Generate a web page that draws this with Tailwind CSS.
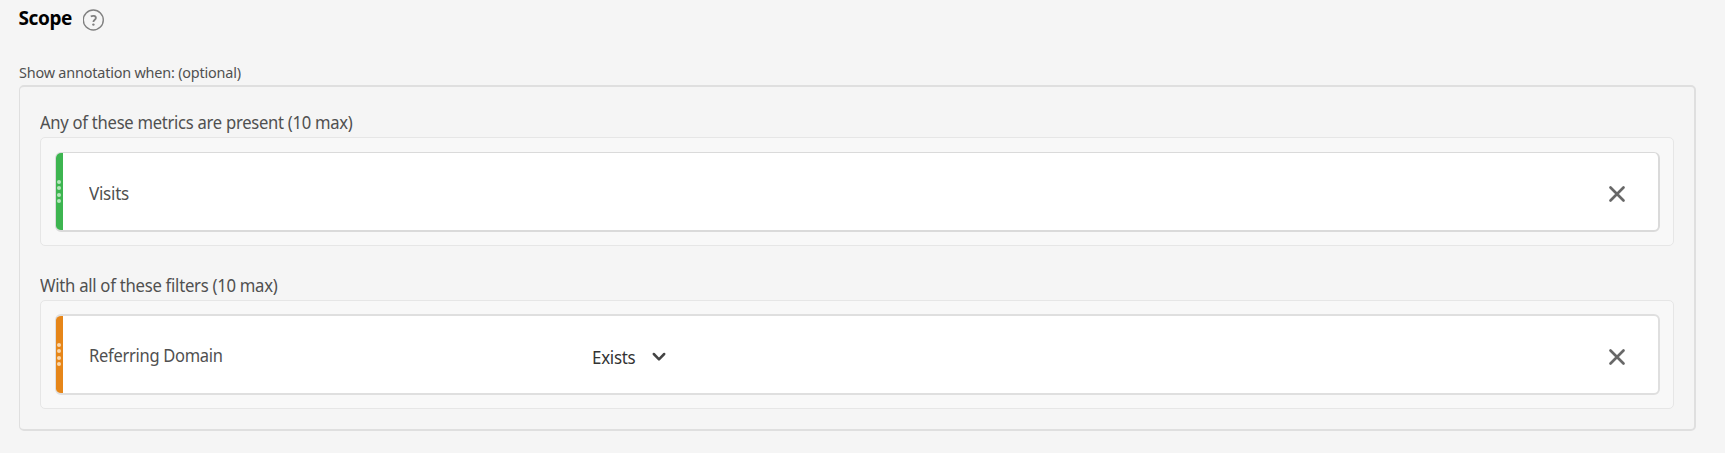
<!DOCTYPE html>
<html lang="en">
<head>
<meta charset="utf-8">
<title>Scope</title>
<script src="https://cdn.jsdelivr.net/npm/@tailwindcss/browser@4"></script>
</head>
<body class="h-[453px] overflow-hidden bg-[#f5f5f5] pl-[19px] pr-[29px] font-['Noto_Sans',sans-serif] text-[#505050]">
<header class="flex h-[64px] items-start pt-[4px]">
  <h1 class="h-7 w-[64px] whitespace-nowrap text-[19px] leading-7 font-bold tracking-[-0.4px] text-black"><span class="-ml-[0.5px] inline-block">Scope</span></h1>
  <svg class="mt-[5px] size-[22px]" viewBox="0 0 22 22" fill="none" stroke="#808080"><circle cx="10.3" cy="11" r="10" stroke-width="1.4"/><path d="M7.8 7.5C9.3 6.4 12.9 6.4 12.9 8.9C12.9 10.7 10.4 10.9 10.4 13.1" stroke-width="1.8"/><circle cx="10.4" cy="15.6" r="1.2" fill="#808080" stroke="none"/></svg>
</header>
<p class="h-[21px] text-[15px] leading-[17px] tracking-[-0.2px] whitespace-nowrap"><span class="-ml-[0.5px] inline-block origin-left scale-x-[0.961]">Show annotation when: (optional)</span></p>
<main class="h-[346px] rounded-[5px] border-y-2 border-r-2 border-l border-[#dfdfdf] pt-[22px] pr-[20px] pl-[20px]">
  <h2 class="h-[28px] text-[18px] leading-[27px] tracking-[-0.3px] whitespace-nowrap"><span class="inline-block origin-left scale-x-[0.923]">Any of these metrics are present (10 max)</span></h2>
  <section class="h-[109px] rounded-[5px] border border-[#e6e6e6] bg-[#f8f8f8] pr-[13px] pl-[14px] pt-[14px]">
    <div class="flex h-[80px] items-center overflow-hidden rounded-[6px] border-t border-r-2 border-b-2 border-l border-[#dadada] bg-white">
      <div class="flex h-[79px] w-[7px] shrink-0 flex-col items-center justify-center gap-[2.6px] bg-[#3db550] pr-px"><i class="size-1 rounded-full bg-[#b5e6bc]"></i><i class="size-1 rounded-full bg-[#b5e6bc]"></i><i class="size-1 rounded-full bg-[#b5e6bc]"></i><i class="size-1 rounded-full bg-[#b5e6bc]"></i></div>
      <span class="ml-[26px] origin-left scale-x-[0.95] pt-[3px] text-[18px] tracking-[-0.3px]">Visits</span>
      <svg class="mt-[5px] mr-[32px] ml-auto size-[18px]" viewBox="0 0 18 18" fill="none" stroke="#686868" stroke-width="2.7" stroke-linecap="round"><path d="M2.5 2.5 15.5 15.5M15.5 2.5 2.5 15.5"/></svg>
    </div>
  </section>
  <h2 class="mt-[26px] h-[28px] text-[18px] leading-[27px] tracking-[-0.3px] whitespace-nowrap"><span class="inline-block origin-left scale-x-[0.928]">With all of these filters (10 max)</span></h2>
  <section class="h-[109px] rounded-[5px] border border-[#e6e6e6] bg-[#f8f8f8] pr-[13px] pl-[14px] pt-[13px]">
    <div class="flex h-[81px] items-center overflow-hidden rounded-[6px] border-t-2 border-r-2 border-b-2 border-l border-[#dfdfdf] bg-white">
      <div class="flex h-[79px] w-[7px] shrink-0 flex-col items-center justify-center gap-[2.6px] bg-[#e68619] pr-px"><i class="size-1 rounded-full bg-[#fad7ac]"></i><i class="size-1 rounded-full bg-[#fad7ac]"></i><i class="size-1 rounded-full bg-[#fad7ac]"></i><i class="size-1 rounded-full bg-[#fad7ac]"></i></div>
      <span class="ml-[26px] w-[503px] origin-left scale-x-[0.916] pt-[2px] text-[18px] tracking-[-0.3px]">Referring Domain</span>
      <span class="w-[60px] origin-left scale-x-[0.94] pt-[5px] text-[18px] tracking-[-0.3px] text-[#333]">Exists</span>
      <svg class="mt-[4px] h-[10px] w-[14px]" viewBox="0 0 14 10" fill="none" stroke="#444" stroke-width="2.5" stroke-linecap="round" stroke-linejoin="round"><path d="M1.8 2 7 7.3 12.2 2"/></svg>
      <svg class="mt-[5px] mr-[32px] ml-auto size-[18px]" viewBox="0 0 18 18" fill="none" stroke="#686868" stroke-width="2.7" stroke-linecap="round"><path d="M2.5 2.5 15.5 15.5M15.5 2.5 2.5 15.5"/></svg>
    </div>
  </section>
</main>
</body>
</html>
